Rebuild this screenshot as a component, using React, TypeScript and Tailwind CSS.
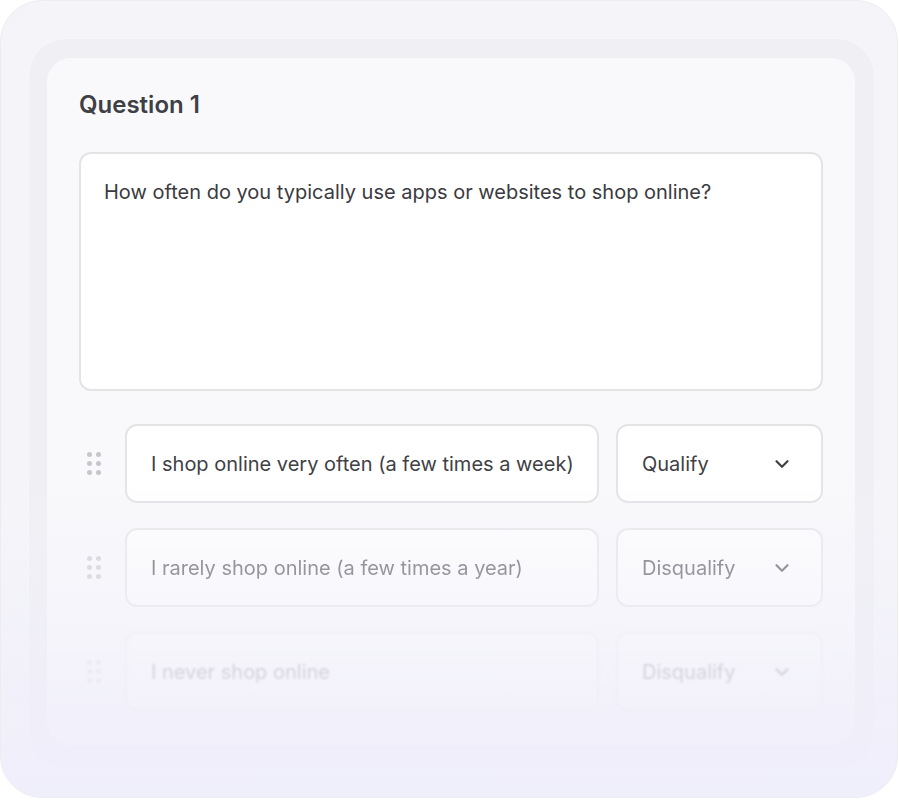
import { ChevronDown } from 'lucide-react';

interface Answer {
  text: string;
  verdict: string;
  fade: string;
}

const answers: Answer[] = [
  { text: 'I shop online very often (a few times a week)', verdict: 'Qualify', fade: '' },
  { text: 'I rarely shop online (a few times a year)', verdict: 'Disqualify', fade: 'opacity-70 blur-[0.7px]' },
  { text: 'I never shop online', verdict: 'Disqualify', fade: 'opacity-40 blur-[1px]' },
];

function DragHandle() {
  return (
    <div className="grid grid-cols-2 gap-x-[4px] gap-y-[4px] w-[13px]">
      {Array.from({ length: 6 }).map((_, i) => (
        <span key={i} className="w-[5px] h-[5px] rounded-full bg-[#c6c6cc]" />
      ))}
    </div>
  );
}

function AnswerRow({ answer }: { answer: Answer }) {
  return (
    <div className={`flex items-center h-[79px] ${answer.fade}`}>
      <div className="w-[46px] pl-[8px] flex items-center">
        <DragHandle />
      </div>
      <div className="flex-1 h-full flex items-center pl-[24px] pr-[12px] bg-white rounded-[12px] border-2 border-[#e4e4e7] text-[20px] text-[#3f3f46] whitespace-nowrap">
        {answer.text}
      </div>
      <div className="w-[207px] ml-[17px] h-full flex items-center justify-between pl-[24px] pr-[28px] bg-white rounded-[12px] border-2 border-[#e4e4e7] text-[20px] text-[#3f3f46]">
        <span>{answer.verdict}</span>
        <ChevronDown className="w-[22px] h-[22px]" strokeWidth={2.4} />
      </div>
    </div>
  );
}

export default function App() {
  return (
    <div
      className="w-[900px] h-[800px] bg-white"
      style={{ fontFamily: 'Inter, "Noto Sans", sans-serif' }}
    >
      <div className="relative w-[898px] h-[798px] rounded-[42px] bg-[#f5f5f9] border border-[#ececf1] pt-[37px] pl-[27px] pr-[22px] pb-[27px] overflow-hidden">
        <div className="h-full rounded-[38px] bg-[#f0f0f4] border border-[#f7f7fa] pt-[19px] pl-[18px] pr-[19px] pb-[24px]">
          <div className="h-full rounded-[24px] bg-[#f9f9fb] px-[32px] pt-[32px]">
            <h2 className="text-[24px] leading-[30px] font-semibold text-[#3f3f46] mb-[32px]">Question 1</h2>
            <div className="h-[239px] bg-white rounded-[12px] border-2 border-[#e4e4e7] px-[23px] pt-[23px] text-[20px] leading-[30px] text-[#3a3a40]">
              How often do you typically use apps or websites to shop online?
            </div>
            <div className="mt-[33px] flex flex-col gap-[25px]">
              {answers.map((a) => (
                <AnswerRow key={a.text} answer={a} />
              ))}
            </div>
          </div>
        </div>
        <div className="absolute left-0 right-0 bottom-0 h-[320px] bg-gradient-to-b from-[#efeefb]/0 via-[#efeefb]/45 to-[#efeefb] pointer-events-none" />
      </div>
    </div>
  );
}
